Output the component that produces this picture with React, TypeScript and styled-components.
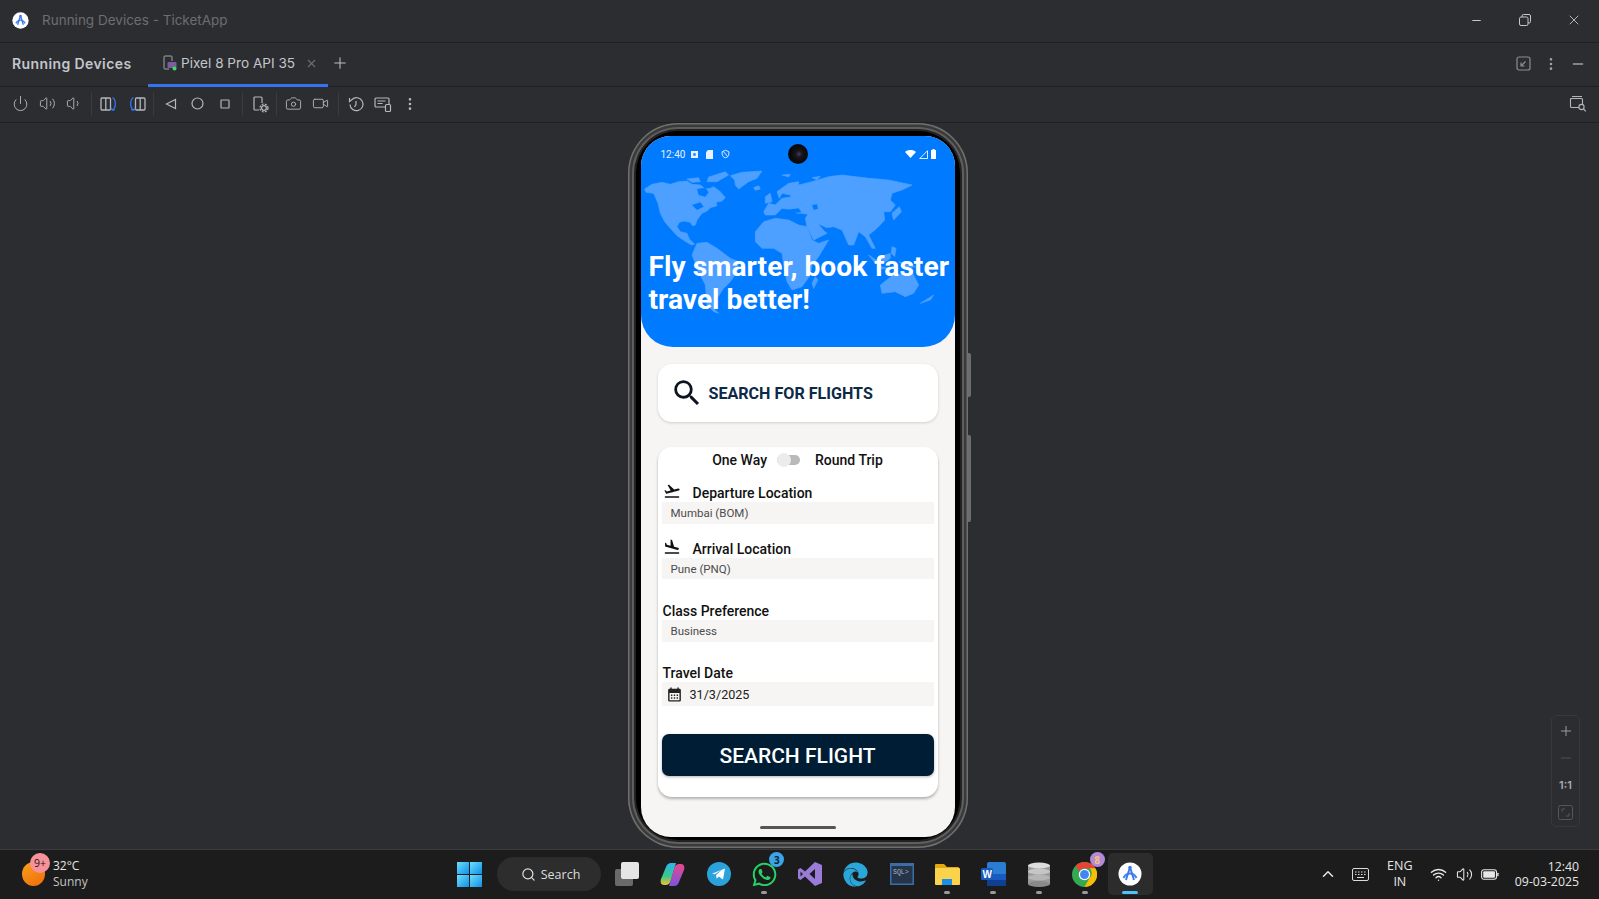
import React from 'react';
import styled, { createGlobalStyle } from 'styled-components';
import {
  Power, Volume2, Volume1, Camera, Video, Plus, X, Minus, MoreVertical, ChevronUp,
  Wifi, Search,
} from 'lucide-react';
import { MdFlightTakeoff, MdFlightLand, MdCalendarMonth, MdSearch } from 'react-icons/md';
import { FaWhatsapp, FaEdge } from 'react-icons/fa';

const GlobalStyle = createGlobalStyle`
  html, body { margin: 0; padding: 0; height: 100%; background: #2b2d30; overflow: hidden; }
  #root { height: 100%; }
  * { box-sizing: border-box; }
`;

const Page = styled.div`
  height: 100vh;
  display: flex;
  flex-direction: column;
  font-family: Inter, "Liberation Sans", sans-serif;
  background: #2b2d30;
  position: relative;
`;

const TitleBar = styled.div`
  height: 43px;
  flex: none;
  display: flex;
  align-items: center;
  padding: 0 1px 2px 12px;
  border-bottom: 1px solid #1f2022;
`;

const AppTitle = styled.span`
  margin-left: 13px;
  font-size: 13.5px;
  color: #6c6e73;
`;

const WindowControls = styled.div`
  margin-left: auto;
  display: flex;
  color: #c6c8cc;
`;

const WindowButton = styled.div`
  width: 48.5px;
  height: 40px;
  display: flex;
  align-items: center;
  justify-content: center;
`;

const TabsBar = styled.div`
  height: 44px;
  flex: none;
  display: flex;
  align-items: stretch;
  padding-left: 12px;
  border-bottom: 1px solid #1f2022;
`;

const PanelName = styled.span`
  align-self: center;
  margin-bottom: 2px;
  font-size: 14px;
  font-weight: 600;
  color: #c3c6cb;
  letter-spacing: 0.4px;
  width: 136px;
`;

const Tab = styled.div`
  width: 180px;
  display: flex;
  align-items: center;
  padding: 0 0 1px 15px;
  gap: 4px;
  color: #c3c6cb;
  font-size: 13.6px;
  border-bottom: 3px solid #3574f0;
  margin-bottom: -1px;
`;

const TabClose = styled.span`
  margin-left: 6px;
  display: flex;
  color: #6c6e73;
`;

const AddTab = styled.span`
  align-self: center;
  margin: 0 0 3px 3px;
  display: flex;
  color: #bcbec4;
`;

const RightTools = styled.div`
  margin-left: auto;
  display: flex;
  align-items: center;
  color: #9da0a8;
  padding: 0 8px 2px 0;
`;

const SmallTool = styled.div`
  width: 27px;
  display: flex;
  justify-content: center;
`;

const Toolbar = styled.div`
  height: 36px;
  flex: none;
  display: flex;
  align-items: center;
  padding: 0 8px 2px 7px;
  border-bottom: 1px solid #1f2022;
  color: #b4b7bd;
`;

const ToolButton = styled.div<{ $w?: number }>`
  width: ${p => p.$w ?? 27}px;
  height: 26px;
  flex: none;
  display: flex;
  align-items: center;
  justify-content: center;
`;

const FindButton = styled(ToolButton)`
  margin-left: auto;
`;

const ToolSep = styled.div<{ $w: number }>`
  width: ${p => p.$w}px;
  flex: none;
  height: 24px;
  display: flex;
  justify-content: center;
  &::before {
    content: '';
    width: 1px;
    background: #393b40;
  }
`;

const Stage = styled.main`
  flex: 1;
  min-height: 0;
  display: flex;
  justify-content: center;
  align-items: flex-start;
  padding-right: 4px;
`;

const Phone = styled.div`
  position: relative;
  width: 340px;
  height: 725px;
  border-radius: 50px;
  padding: 13px 13px 11px;
  background: #000;
  box-shadow:
    inset 0 0 0 1.5px #6f6f6f,
    inset 0 0 0 4px #3a3a3a,
    inset 0 0 0 6px #5e5e5e,
    inset 0 0 0 8px #222;
`;

const SideKey = styled.div<{ $top: number; $h: number }>`
  position: absolute;
  right: -3px;
  top: ${p => p.$top}px;
  height: ${p => p.$h}px;
  width: 3px;
  background: #6b6d70;
  border-radius: 0 2px 2px 0;
`;

const Screen = styled.div`
  height: 100%;
  background: #f6f5f3;
  border-radius: 30px;
  overflow: hidden;
  display: flex;
  flex-direction: column;
  position: relative;
  font-family: Roboto, sans-serif;
`;

const Hero = styled.header`
  position: relative;
  height: 211px;
  flex: none;
  background: #007aff;
  border-radius: 0 0 32px 32px;
  color: #fff;
  display: flex;
  flex-direction: column;
  justify-content: flex-end;
  padding: 0 0 31px 8px;
`;

const MapArt = styled.svg`
  position: absolute;
  left: 1px;
  top: 29px;
  width: 315px;
  height: 165px;
`;

const StatusBar = styled.div`
  position: absolute;
  left: 20px;
  right: 19px;
  top: 10px;
  height: 16px;
  display: flex;
  align-items: center;
  gap: 8px;
  font-size: 10px;
  color: #e8f2ff;
`;

const StatusTime = styled.span`
  margin-right: -2px;
`;

const StatusRight = styled.div`
  margin-left: auto;
  display: flex;
  align-items: center;
  gap: 3px;
`;

const PunchHole = styled.div`
  position: absolute;
  left: 147px;
  top: 8px;
  width: 20px;
  height: 20px;
  border-radius: 50%;
  background: radial-gradient(circle at 55% 50%, #4a3b55 0, #16161c 22%, #08080a 60%);
`;

const HeroTitle = styled.h1`
  position: relative;
  margin: 0;
  font-size: 28.2px;
  line-height: 33px;
  font-weight: 700;
  white-space: nowrap;
`;

const Content = styled.div`
  padding: 17px 17px 0;
  display: flex;
  flex-direction: column;
`;

const SearchCard = styled.div`
  height: 58px;
  background: #fff;
  border-radius: 14px;
  box-shadow: 0 1px 3px rgba(0, 0, 0, 0.16);
  display: flex;
  align-items: center;
  padding-left: 12px;
  gap: 5px;
  color: #0b1420;
`;

const SearchTitle = styled.span`
  font-size: 16.1px;
  font-weight: 700;
  color: #0c2a47;
  padding-top: 1px;
`;

const FormCard = styled.section`
  margin-top: 25px;
  height: 350px;
  background: #fff;
  border-radius: 14px;
  box-shadow: 0 2px 3px rgba(0, 0, 0, 0.28);
  padding: 0 4px;
`;

const TripRow = styled.div`
  height: 27px;
  display: flex;
  align-items: center;
  justify-content: center;
  font-size: 14px;
  font-weight: 500;
  color: #111;
  padding: 0 0 1px 0;
`;

const TripSwitch = styled.div`
  position: relative;
  width: 23px;
  height: 10px;
  margin: 0 15px 0 10px;
  border-radius: 5px;
  background: #b9b9b9;
  &::before {
    content: '';
    position: absolute;
    left: 0;
    top: -2px;
    width: 14px;
    height: 14px;
    border-radius: 50%;
    background: #ececec;
  }
`;

const Field = styled.div<{ $top: number }>`
  margin-top: ${p => p.$top}px;
`;

const FieldLabel = styled.div`
  height: 18px;
  display: flex;
  align-items: center;
  padding-left: 1px;
  font-size: 14px;
  font-weight: 500;
  color: #111;
  white-space: nowrap;
`;

const LabelIcon = styled.span`
  width: 30px;
  display: flex;
  align-items: center;
  padding-bottom: 4px;
`;

const FieldValue = styled.div<{ $h: number }>`
  height: ${p => p.$h}px;
  background: #f6f5f3;
  display: flex;
  align-items: center;
  padding-left: 9px;
  font-size: 11.5px;
  color: #4c4c4c;
`;

const DateValue = styled(FieldValue)`
  padding-left: 4px;
  gap: 7px;
  font-size: 12.6px;
  color: #222;
`;

const SearchButton = styled.button`
  display: block;
  margin-top: 28px;
  width: 100%;
  height: 42px;
  border: none;
  border-radius: 7px;
  padding: 2px 0 0;
  background: #001d36;
  color: #fff;
  font-family: Roboto, sans-serif;
  font-size: 21px;
  font-weight: 500;
  box-shadow: 0 1px 3px rgba(0, 0, 0, 0.3);
`;

const HomeBar = styled.div`
  position: absolute;
  left: 119px;
  bottom: 8px;
  width: 76px;
  height: 3px;
  border-radius: 2px;
  background: #555;
`;

const ZoomPanel = styled.div`
  position: absolute;
  left: 1551px;
  top: 715px;
  width: 29px;
  height: 112px;
  border: 1px solid #36383c;
  border-radius: 5px;
  display: flex;
  flex-direction: column;
  align-items: center;
  color: #a9acb3;
`;

const ZoomItem = styled.div<{ $h: number }>`
  height: ${p => p.$h}px;
  display: flex;
  align-items: center;
  justify-content: center;
  font-size: 11px;
  font-weight: 600;
`;

const Taskbar = styled.footer`
  height: 50px;
  flex: none;
  background: #1c1c1c;
  border-top: 1px solid #3a3b3d;
  display: flex;
  align-items: center;
  padding-bottom: 1px;
  font-family: "Open Sans", "Noto Sans", sans-serif;
  color: #e6e6e6;
`;

const Weather = styled.div`
  width: 447px;
  flex: none;
  padding-left: 22px;
  display: flex;
  align-items: center;
  gap: 8px;
`;

const WeatherIcon = styled.div`
  position: relative;
  width: 23px;
  height: 24px;
  border-radius: 50%;
  background: linear-gradient(150deg, #f9a11b, #ef6c0c);
`;

const WeatherBadge = styled.span`
  position: absolute;
  left: 8px;
  top: -9px;
  width: 20px;
  height: 20px;
  border-radius: 50%;
  background: #f7929a;
  color: #2a1214;
  font-size: 10.5px;
  display: flex;
  align-items: center;
  justify-content: center;
`;

const WeatherText = styled.div`
  font-size: 12px;
  line-height: 16px;
`;

const Dim = styled.div`
  color: #c4c4c4;
`;

const TaskIcon = styled.div<{ $active?: boolean }>`
  position: relative;
  width: 45.75px;
  height: 42px;
  flex: none;
  display: flex;
  align-items: center;
  justify-content: center;
  border-radius: 5px;
  background: ${p => (p.$active ? '#2c2c2c' : 'transparent')};
`;

const Running = styled.span<{ $active?: boolean }>`
  position: absolute;
  bottom: 1px;
  left: 50%;
  transform: translateX(-50%);
  width: ${p => (p.$active ? 16 : 6)}px;
  height: 3px;
  border-radius: 2px;
  background: ${p => (p.$active ? '#4cc2ff' : '#9a9a9a')};
`;

const CountBadge = styled.span<{ $bg: string; $fg: string }>`
  position: absolute;
  right: 3px;
  top: -1px;
  width: 15px;
  height: 15px;
  border-radius: 50%;
  background: ${p => p.$bg};
  color: ${p => p.$fg};
  font-size: 10px;
  font-weight: 700;
  display: flex;
  align-items: center;
  justify-content: center;
`;

const SearchPill = styled.div`
  width: 104px;
  height: 34px;
  margin: 0 3.5px 0 4px;
  flex: none;
  border-radius: 17px;
  background: #2d2d2d;
  display: flex;
  align-items: center;
  padding-left: 24px;
  gap: 5px;
  font-size: 12.5px;
  color: #dcdcdc;
`;

const Tray = styled.div`
  margin-left: auto;
  display: flex;
  align-items: center;
  padding-right: 20px;
  color: #e6e6e6;
`;

const TraySlot = styled.div<{ $w: number }>`
  width: ${p => p.$w}px;
  display: flex;
  justify-content: center;
  align-items: center;
`;

const Lang = styled.div`
  width: 44px;
  margin-right: 4px;
  text-align: center;
  font-size: 12.5px;
  line-height: 16px;
`;

const Clock = styled.div`
  margin-left: 12px;
  text-align: right;
  font-size: 12.3px;
  line-height: 15.5px;
`;

const WorldMap = () => (
  <MapArt viewBox="0 0 945 495" aria-hidden="true">
    <g fill="#4da0ff" stroke="#4da0ff" strokeWidth="2" strokeLinejoin="round">
      <path d="M8 72 30 58 60 52 85 58 110 50 135 48 150 58 175 60 190 72 205 70 215 65 235 80 250 98 240 108 222 112 225 122 205 128 195 138 180 145 172 155 165 165 160 180 152 182 145 172 125 168 112 172 105 185 115 200 135 205 142 222 158 238 148 240 128 228 105 212 85 190 68 170 55 145 48 115 35 85 12 82Z" />
      <path d="M265 32 300 22 360 18 345 40 320 50 290 72 280 60 278 45Z" />
      <path d="M135 42 170 38 175 50 150 52ZM200 36 250 20 260 30 225 50 195 50ZM420 30 445 28 440 36ZM510 38 535 34 525 44Z" />
      <path d="M335 68 350 62 355 72 340 76Z" />
      <path d="M370 95 385 85 390 110 370 115Z" />
      <path d="M150 270 165 235 195 232 225 250 265 280 290 290 285 320 265 350 245 370 225 400 215 430 230 445 215 440 195 420 190 360 170 320Z" />
      <path d="M340 200 365 170 400 160 440 165 470 180 495 185 510 225 530 235 560 225 530 275 510 300 505 330 480 365 450 375 435 350 425 300 420 265 395 250 360 250 340 230Z" />
      <path d="M365 140 380 115 400 120 420 100 450 95 470 110 490 125 520 135 500 148 478 145 465 145 450 135 420 130 400 150 370 150Z" />
      <path d="M405 80 440 55 470 50 470 70 445 90 420 85 412 100Z" />
      <path d="M445 92 470 60 510 50 560 35 600 30 680 40 740 45 810 60 780 75 750 85 745 105 760 120 745 140 725 140 728 165 705 190 680 210 700 250 690 250 670 215 650 200 635 240 620 240 600 195 575 185 540 190 555 205 515 225 495 185 490 160 500 145 520 135 490 125 470 110Z" />
      <path d="M750 145 772 125 778 140 755 165Z" />
      <path d="M680 270 710 290 700 295ZM715 275 745 265 745 280 725 295ZM750 245 762 250 758 275 748 265ZM770 290 820 305 800 310ZM715 305 745 310 720 312Z" />
      <path d="M715 360 760 325 790 330 810 320 830 360 815 385 790 395 760 380 720 385Z" />
      <path d="M835 415 875 390 865 405Z" />
      <path d="M520 335 528 345 515 370 510 355Z" />
    </g>
    <g fill="#007aff">
      <path d="M165 72 190 68 200 82 190 95 170 90Z" />
      <path d="M150 120 175 112 185 125 165 135Z" />
      <path d="M430 135 470 130 478 142 445 145Z" />
      <path d="M510 120 525 118 528 132 515 134Z" />
      <path d="M530 178 560 192 550 200Z" />
    </g>
  </MapArt>
);

const RotateIcon = ({ flip }: { flip?: boolean }) => (
  <svg width="18" height="18" viewBox="0 0 18 18" fill="none" strokeWidth="1.3" transform={flip ? 'scale(-1 1)' : undefined}>
    <rect x="1" y="3" width="9.5" height="12" rx="1" stroke="#b4b7bd" />
    <path d="M5.8 3v12" stroke="#b4b7bd" />
    <path d="M12.5 2.5c3.5 2 4 10 0 12.5M10.8 13l1.700 2.200 2.300-.5" stroke="#3574f0" />
  </svg>
);

const SnapshotIcon = () => (
  <svg width="18" height="18" viewBox="0 0 18 18" fill="none" stroke="currentColor" strokeWidth="1.2">
    <path d="M8 15H4a1 1 0 0 1-1-1V3a1 1 0 0 1 1-1h6a1 1 0 0 1 1 1v5" />
    <circle cx="13" cy="13" r="2.4" />
    <circle cx="13" cy="13" r="4" strokeDasharray="2 1.2" />
  </svg>
);

const ReplayIcon = () => (
  <svg width="18" height="18" viewBox="0 0 18 18" fill="none" stroke="currentColor" strokeWidth="1.2">
    <path d="M3 9.5a6.5 6.5 0 1 0 2-5L2.5 6.5V3" />
    <path d="M9 6v3.5L7.5 12" />
  </svg>
);

const MirrorIcon = () => (
  <svg width="18" height="18" viewBox="0 0 18 18" fill="none" stroke="currentColor" strokeWidth="1.2">
    <rect x="1" y="3" width="14" height="9" rx="1" />
    <path d="M3.5 6h8M3.5 8.5h5" />
    <rect x="11.5" y="9.5" width="5" height="7" rx="1" fill="#2b2d30" />
  </svg>
);

const CollapseIcon = () => (
  <svg width="15" height="15" viewBox="0 0 15 15" fill="none">
    <rect x="1" y="1" width="13" height="13" rx="2" stroke="#8a8d93" strokeWidth="1.2" />
    <path d="M9.5 5.5 5 10M5 6.5V10h3.5" stroke="#8a8d93" strokeWidth="1.2" />
  </svg>
);

const FindDeviceIcon = () => (
  <svg width="18" height="18" viewBox="0 0 18 18" fill="none" stroke="currentColor" strokeWidth="1.1">
    <path d="M3 1.5h10M1.5 5V3.5" />
    <rect x="1.5" y="3.5" width="12" height="9" rx="1" />
    <circle cx="12.5" cy="12" r="2.6" fill="#2b2d30" />
    <path d="m14.5 14 2.3 2.3" />
  </svg>
);

const StudioLogo = ({ size }: { size: number }) => (
  <svg width={size} height={size} viewBox="0 0 24 24">
    <circle cx="12" cy="12" r="11.5" fill="#fff" />
    <path d="M5.5 16c1.5-3 3.5-4.500 6.500-4.500s5 1.500 6.500 4.500" fill="none" stroke="#4285f4" strokeWidth="2" />
    <path d="M12 5 8 18M12 5l4 13" stroke="#3b78e7" strokeWidth="1.9" fill="none" />
    <circle cx="12" cy="5.5" r="1.7" fill="#3b78e7" />
  </svg>
);

const WindowsLogo = () => (
  <svg width="25" height="25" viewBox="0 0 25 25">
    <defs>
      <linearGradient id="winTile" x1="0" y1="0" x2="1" y2="1">
        <stop offset="0" stopColor="#6ce0fa" />
        <stop offset="1" stopColor="#0f8fe8" />
      </linearGradient>
    </defs>
    <rect width="12" height="12" fill="url(#winTile)" />
    <rect x="13" width="12" height="12" fill="url(#winTile)" />
    <rect y="13" width="12" height="12" fill="url(#winTile)" />
    <rect x="13" y="13" width="12" height="12" fill="url(#winTile)" />
  </svg>
);

const TaskViewIcon = () => (
  <svg width="26" height="26" viewBox="0 0 26 26">
    <rect x="1" y="8" width="18" height="17" rx="2" fill="#6a6a6a" />
    <rect x="7" y="1" width="18" height="17" rx="2" fill="#e6e6e6" />
  </svg>
);

const CopilotIcon = () => (
  <svg width="25" height="25" viewBox="0 0 25 25">
    <defs>
      <linearGradient id="copA" x1="0" y1="0" x2="0" y2="1">
        <stop offset="0" stopColor="#2bb4ef" />
        <stop offset="0.6" stopColor="#38c98a" />
        <stop offset="1" stopColor="#f6c02e" />
      </linearGradient>
      <linearGradient id="copB" x1="0" y1="0" x2="0" y2="1">
        <stop offset="0" stopColor="#e8488a" />
        <stop offset="1" stopColor="#7a54e0" />
      </linearGradient>
    </defs>
    <path d="M6 5c1-3 3-4 5-4h5l-5 17c-.6 2-2 5-5 5H4c-3 0-4-3-3-6Z" fill="url(#copA)" />
    <path d="M19 20c-1 3-3 4-5 4H9l5-17c.6-2 2-5 5-5h2c3 0 4 3 3 6Z" fill="url(#copB)" />
  </svg>
);

const TelegramIcon = () => (
  <svg width="24" height="24" viewBox="0 0 24 24">
    <circle cx="12" cy="12" r="12" fill="#2aa3dc" />
    <path d="M5 11.8 18 6.500l-2 11-4.200-3-2.200 2.200-.5-3.700 6-5.200-7.400 4.500Z" fill="#fff" />
  </svg>
);

const VisualStudioIcon = () => (
  <svg width="24" height="26" viewBox="0 0 24 26">
    <path d="M17 1 24 4v18l-7 3-10-9.500L2.500 19 0 17.500v-9L2.500 7l4.500 3.500ZM17 8l-5.500 5 5.500 5ZM2.500 10.500v5L5 13Z" fill="#9a7bd8" fillRule="evenodd" />
  </svg>
);

const SqlIcon = () => (
  <svg width="24" height="22" viewBox="0 0 24 22">
    <rect width="24" height="22" fill="#3a6ea5" />
    <rect x="1.5" y="3" width="21" height="17.5" fill="#26344a" />
    <text x="3" y="11" fontSize="6.5" fontFamily="Liberation Mono, monospace" fill="#aab6c8">SQL&gt;</text>
  </svg>
);

const FolderIcon = () => (
  <svg width="26" height="24" viewBox="0 0 26 24">
    <path d="M1 3a1 1 0 0 1 1-1h8l3 3h11a1 1 0 0 1 1 1v3H1Z" fill="#e3a80f" />
    <rect x="1" y="6" width="25" height="17" rx="1" fill="#fbd24b" />
    <rect x="8" y="17" width="10" height="6" fill="#1a8fe3" />
  </svg>
);

const WordIcon = () => (
  <svg width="25" height="24" viewBox="0 0 25 24">
    <rect x="6" y="0" width="19" height="24" rx="2" fill="#2b7cd3" />
    <rect x="6" y="12" width="19" height="6" fill="#185abd" />
    <rect x="6" y="18" width="19" height="6" fill="#103f91" />
    <rect x="0" y="6" width="12" height="12" rx="1.5" fill="#185abd" />
    <text x="1.5" y="15.5" fontSize="10" fontWeight="700" fontFamily="Liberation Sans, sans-serif" fill="#fff">W</text>
  </svg>
);

const DatabaseIcon = () => (
  <svg width="24" height="25" viewBox="0 0 24 25">
    <rect x="1" y="3" width="22" height="19" fill="#9a9a9a" />
    <ellipse cx="12" cy="22" rx="11" ry="3" fill="#8a8a8a" />
    <ellipse cx="12" cy="15.5" rx="11" ry="3" fill="#b5b5b5" />
    <ellipse cx="12" cy="9.5" rx="11" ry="3" fill="#c6c6c6" />
    <ellipse cx="12" cy="3.5" rx="11" ry="3" fill="#dddddd" />
  </svg>
);

const ChromeIcon = () => (
  <svg width="25" height="25" viewBox="0 0 24 24">
    <circle cx="12" cy="12" r="12" fill="#34a853" />
    <path d="M12 0a12 12 0 0 1 10.4 6H12a6 6 0 0 0-5.200 3L3.600 3.500A12 12 0 0 1 12 0Z" fill="#ea4335" />
    <path d="M22.400 6A12 12 0 0 1 12 24l5-9a6 6 0 0 0 0-9Z" fill="#fbbc04" />
    <circle cx="12" cy="12" r="5.5" fill="#fff" />
    <circle cx="12" cy="12" r="4.3" fill="#4285f4" />
  </svg>
);

const BatteryIcon = () => (
  <svg width="18" height="11" viewBox="0 0 20 12" fill="none">
    <rect x="0.7" y="0.7" width="16.5" height="10.6" rx="2.5" stroke="#e6e6e6" strokeWidth="1.2" />
    <rect x="2.5" y="2.5" width="13" height="7" rx="1" fill="#e6e6e6" />
    <rect x="18" y="4" width="1.5" height="4" rx="0.7" fill="#e6e6e6" />
  </svg>
);

const KeyboardIcon = () => (
  <svg width="17" height="13" viewBox="0 0 17 13" fill="none" stroke="#dcdcdc">
    <rect x="0.5" y="0.5" width="16" height="12" rx="1.5" />
    <path d="M3 4h1.500M6 4h1.500M9 4h1.500M12 4h1.500M3 6.500h1.500M6 6.500h1.500M9 6.500h1.500M12 6.500h1.500M5 9.500h7" />
  </svg>
);

const StatusIcons = () => (
  <>
    <svg width="7" height="7" viewBox="0 0 9 9"><path d="M0 0h9v9H0Zm3 3v3h3V3Z" fill="#e8f2ff" fillRule="evenodd" /></svg>
    <svg width="7" height="9" viewBox="0 0 11 12" preserveAspectRatio="none"><path d="M3 0h8v12H0V3Z" fill="#e8f2ff" /></svg>
    <svg width="9" height="10" viewBox="0 0 12 12" fill="none" stroke="#e8f2ff" strokeWidth="1.3"><path d="M6 1 10.500 3v3c0 2.500-2 4.500-4.500 5C3.500 10.500 1.500 8.500 1.500 6V3ZM3 2.500l6 7" /></svg>
  </>
);

const IconSize = 17;

export default function App() {
  return (
    <>
      <GlobalStyle />
      <Page>
        <TitleBar>
          <StudioLogo size={17} />
          <AppTitle>Running Devices - TicketApp</AppTitle>
          <WindowControls>
            <WindowButton><Minus size={13} /></WindowButton>
            <WindowButton>
              <svg width="12" height="12" viewBox="0 0 12 12" fill="none" stroke="currentColor">
                <rect x="0.5" y="3" width="8.5" height="8.5" rx="1.5" />
                <path d="M3 3V2A1.500 1.500 0 0 1 4.500 .5H10A1.500 1.500 0 0 1 11.500 2v5.500A1.500 1.500 0 0 1 10 9H9" />
              </svg>
            </WindowButton>
            <WindowButton><X size={16} strokeWidth={1.3} /></WindowButton>
          </WindowControls>
        </TitleBar>

        <TabsBar>
          <PanelName>Running Devices</PanelName>
          <Tab>
            <svg width="14" height="16" viewBox="0 0 14 16" fill="none">
              <path d="M6 14H2a1 1 0 0 1-1-1V2a1 1 0 0 1 1-1h6a1 1 0 0 1 1 1v4" stroke="#a4a7ae" />
              <rect x="4.5" y="7" width="9" height="6" rx="1" fill="#7a5d9c" />
              <circle cx="11.5" cy="13.5" r="2" fill="#3fdc5a" />
            </svg>
            Pixel 8 Pro API 35
            <TabClose><X size={13} /></TabClose>
          </Tab>
          <AddTab><Plus size={18} strokeWidth={1.4} /></AddTab>
          <RightTools>
            <SmallTool><CollapseIcon /></SmallTool>
            <SmallTool><MoreVertical size={16} /></SmallTool>
            <SmallTool><Minus size={16} /></SmallTool>
          </RightTools>
        </TabsBar>

        <Toolbar>
          <ToolButton><Power size={IconSize} strokeWidth={1.3} /></ToolButton>
          <ToolButton><Volume2 size={IconSize} strokeWidth={1.3} /></ToolButton>
          <ToolButton><Volume1 size={IconSize} strokeWidth={1.3} /></ToolButton>
          <ToolSep $w={6} />
          <ToolButton $w={30}><RotateIcon /></ToolButton>
          <ToolButton $w={26}><RotateIcon flip /></ToolButton>
          <ToolSep $w={7} />
          <ToolButton>
            <svg width="12" height="12" viewBox="0 0 12 12" fill="none" stroke="currentColor" strokeWidth="1.2"><path d="M10.500 1.500v9L1.500 6Z" /></svg>
          </ToolButton>
          <ToolButton>
            <svg width="13" height="13" viewBox="0 0 13 13" fill="none" stroke="currentColor" strokeWidth="1.2"><circle cx="6.5" cy="6.5" r="5.5" /></svg>
          </ToolButton>
          <ToolButton>
            <svg width="10" height="10" viewBox="0 0 10 10" fill="none" stroke="currentColor" strokeWidth="1.2"><rect x="1" y="1" width="8" height="8" rx="0.5" /></svg>
          </ToolButton>
          <ToolSep $w={8} />
          <ToolButton><SnapshotIcon /></ToolButton>
          <ToolSep $w={7} />
          <ToolButton><Camera size={IconSize} strokeWidth={1.3} /></ToolButton>
          <ToolButton><Video size={IconSize} strokeWidth={1.3} /></ToolButton>
          <ToolSep $w={8} />
          <ToolButton><ReplayIcon /></ToolButton>
          <ToolButton><MirrorIcon /></ToolButton>
          <ToolButton><MoreVertical size={16} /></ToolButton>
          <FindButton><FindDeviceIcon /></FindButton>
        </Toolbar>

        <Stage>
          <Phone>
            <SideKey $top={230} $h={44} />
            <SideKey $top={312} $h={87} />
            <Screen>
              <Hero>
                <WorldMap />
                <StatusBar>
                  <StatusTime>12:40</StatusTime>
                  <StatusIcons />
                  <StatusRight>
                    <svg width="11" height="8" viewBox="0 0 13 10" preserveAspectRatio="none"><path d="M0 2.500C3.500-.8 9.500-.8 13 2.500L6.500 10Z" fill="#fff" /></svg>
                    <svg width="9" height="9" viewBox="0 0 10 10" fill="none" stroke="#fff"><path d="M9.500 .8v8.700H.8Z" /></svg>
                    <svg width="5" height="10" viewBox="0 0 7 11" preserveAspectRatio="none"><path d="M2 0h3v1h2v10H0V1h2Z" fill="#fff" /></svg>
                  </StatusRight>
                </StatusBar>
                <PunchHole />
                <HeroTitle>Fly smarter, book faster<br />travel better!</HeroTitle>
              </Hero>

              <Content>
                <SearchCard>
                  <MdSearch size={34} />
                  <SearchTitle>SEARCH FOR FLIGHTS</SearchTitle>
                </SearchCard>

                <FormCard>
                  <TripRow>
                    One Way
                    <TripSwitch />
                    Round Trip
                  </TripRow>
                  <Field $top={10}>
                    <FieldLabel><LabelIcon><MdFlightTakeoff size={18} /></LabelIcon>Departure Location</FieldLabel>
                    <FieldValue $h={22}>Mumbai (BOM)</FieldValue>
                  </Field>
                  <Field $top={16}>
                    <FieldLabel><LabelIcon><MdFlightLand size={18} /></LabelIcon>Arrival Location</FieldLabel>
                    <FieldValue $h={21}>Pune (PNQ)</FieldValue>
                  </Field>
                  <Field $top={23}>
                    <FieldLabel>Class Preference</FieldLabel>
                    <FieldValue $h={22}>Business</FieldValue>
                  </Field>
                  <Field $top={22}>
                    <FieldLabel>Travel Date</FieldLabel>
                    <DateValue $h={24}><MdCalendarMonth size={17} color="#222" />31/3/2025</DateValue>
                  </Field>
                  <SearchButton>SEARCH FLIGHT</SearchButton>
                </FormCard>
              </Content>
              <HomeBar />
            </Screen>
          </Phone>
        </Stage>

        <ZoomPanel>
          <ZoomItem $h={30}><Plus size={16} strokeWidth={1.3} /></ZoomItem>
          <ZoomItem $h={24}><Minus size={16} strokeWidth={1.3} color="#55575c" /></ZoomItem>
          <ZoomItem $h={30}>1:1</ZoomItem>
          <ZoomItem $h={24}>
            <svg width="15" height="15" viewBox="0 0 15 15" fill="none" stroke="#55575c">
              <rect x="0.5" y="0.5" width="14" height="14" rx="2" />
              <path d="M4 7V4h3M11 8v3H8" />
            </svg>
          </ZoomItem>
        </ZoomPanel>

        <Taskbar>
          <Weather>
            <WeatherIcon><WeatherBadge>9+</WeatherBadge></WeatherIcon>
            <WeatherText>32°C<Dim>Sunny</Dim></WeatherText>
          </Weather>
          <TaskIcon><WindowsLogo /></TaskIcon>
          <SearchPill><Search size={15} />Search</SearchPill>
          <TaskIcon><TaskViewIcon /></TaskIcon>
          <TaskIcon><CopilotIcon /></TaskIcon>
          <TaskIcon><TelegramIcon /></TaskIcon>
          <TaskIcon>
            <FaWhatsapp size={27} color="#25d366" />
            <CountBadge $bg="#3aa5e8" $fg="#10222e">3</CountBadge>
            <Running />
          </TaskIcon>
          <TaskIcon><VisualStudioIcon /></TaskIcon>
          <TaskIcon><FaEdge size={25} color="#2aa7d8" /></TaskIcon>
          <TaskIcon><SqlIcon /></TaskIcon>
          <TaskIcon><FolderIcon /><Running /></TaskIcon>
          <TaskIcon><WordIcon /><Running /></TaskIcon>
          <TaskIcon><DatabaseIcon /><Running /></TaskIcon>
          <TaskIcon>
            <ChromeIcon />
            <CountBadge $bg="#b48ad8" $fg="#f1c27a">8</CountBadge>
            <Running />
          </TaskIcon>
          <TaskIcon $active><StudioLogo size={24} /><Running $active /></TaskIcon>
          <Tray>
            <TraySlot $w={32}><ChevronUp size={18} /></TraySlot>
            <TraySlot $w={34}><KeyboardIcon /></TraySlot>
            <Lang>ENG<br />IN</Lang>
            <TraySlot $w={26}><Wifi size={17} /></TraySlot>
            <TraySlot $w={26}><Volume2 size={17} strokeWidth={1.5} /></TraySlot>
            <TraySlot $w={25}><BatteryIcon /></TraySlot>
            <Clock>12:40<br />09-03-2025</Clock>
          </Tray>
        </Taskbar>
      </Page>
    </>
  );
}
